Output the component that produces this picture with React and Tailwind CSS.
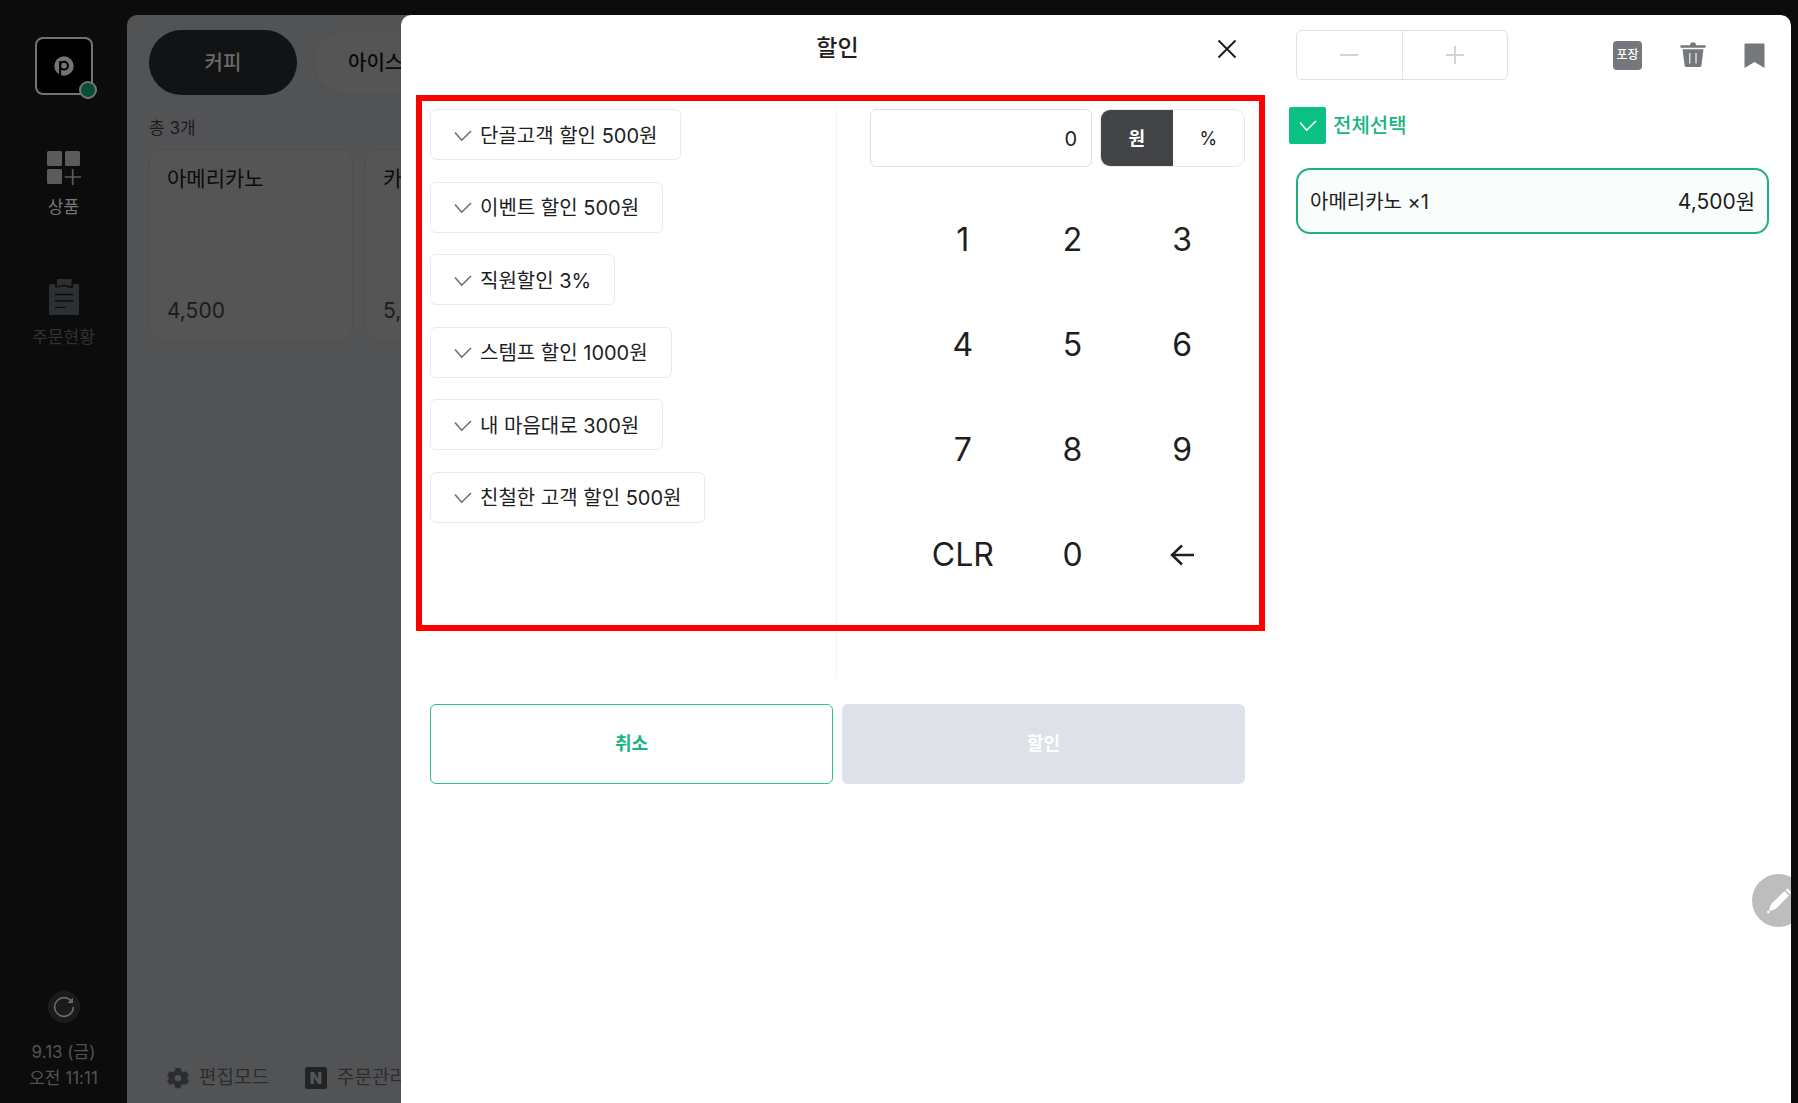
import { useState } from 'react';

const categories = ['커피', '아이스크림'];

const products = [
  { name: '아메리카노', price: '4,500' },
  { name: '카페라떼', price: '5,000' },
];

const discounts = [
  '단골고객 할인 500원',
  '이벤트 할인 500원',
  '직원할인 3%',
  '스템프 할인 1000원',
  '내 마음대로 300원',
  '친철한 고객 할인 500원',
];

const keys = ['1', '2', '3', '4', '5', '6', '7', '8', '9', 'CLR', '0', 'back'];

const CheckMark = ({ className }) => (
  <svg viewBox="0 0 18 12" className={className} fill="none" stroke="currentColor" strokeWidth="1.6">
    <path d="M1 2.5 L7.7 10.2 L17 1" />
  </svg>
);

const Sidebar = () => (
  <aside className="flex w-[127px] shrink-0 flex-col items-center pt-[37px] pb-3">
    <div className="relative flex h-[58px] w-[58px] items-center justify-center rounded-lg border-2 border-[#747474] bg-black">
      <svg viewBox="0 0 20 20" className="h-5 w-5">
        <circle cx="10" cy="10" r="9.7" fill="#747474" />
        <circle cx="10" cy="9.7" r="3.9" fill="none" stroke="#000" strokeWidth="2" />
        <path d="M6.1 5 V20" stroke="#000" strokeWidth="2" />
      </svg>
      <span className="absolute -right-1.5 -bottom-1.5 h-[18px] w-[18px] rounded-full border-2 border-[#747474] bg-[#064d35]" />
    </div>

    <nav className="mt-14 flex flex-col items-center gap-[60px] text-[17px] leading-6">
      <a href="#products" className="flex flex-col items-center gap-[10px] text-[#777]">
        <svg viewBox="0 0 34 34" className="h-[34px] w-[34px]" fill="#5b5b5b">
          <rect x="0" y="0" width="15" height="15" rx="1.5" />
          <rect x="18" y="0" width="15" height="15" rx="1.5" />
          <rect x="0" y="18" width="15" height="15" rx="1.5" />
          <path d="M25.7 18 V34 M17.7 26 H34" stroke="#5b5b5b" strokeWidth="1.7" />
        </svg>
        상품
      </a>
      <a href="#orders" className="flex flex-col items-center gap-[10px] text-[#313233]">
        <svg viewBox="0 0 30 36" className="h-9 w-[30px]" fill="#2d3032">
          <path d="M1.5 5 H6 V8.5 H9.5 L15.2 7 L21 9 H24 V5 H28.5 A1.5 1.5 0 0 1 30 6.5 V34.5 A1.5 1.5 0 0 1 28.5 36 H1.5 A1.5 1.5 0 0 1 0 34.5 V6.5 A1.5 1.5 0 0 1 1.5 5 Z" />
          <path d="M8 0 H22.5 V7.5 L15.2 5.5 L8 7.5 Z" />
          <path d="M6 15.5 H24.5 M6 22 H24.5 M6 28.3 H17" stroke="#0c0c0c" strokeWidth="1.3" />
        </svg>
        주문현황
      </a>
    </nav>

    <button type="button" aria-label="새로고침" className="mt-auto flex h-8 w-8 items-center justify-center rounded-full bg-[#1b1b1b]">
      <svg viewBox="0 0 22 22" className="h-[22px] w-[22px]" fill="none" stroke="#696969" strokeWidth="1.7">
        <path d="M19.5 7.2 A9.3 9.3 0 1 0 20.3 11" />
        <path d="M20 1.5 V7 H14.5 Z" fill="#696969" stroke="none" />
      </svg>
    </button>
    <p className="mt-4 text-center text-[17px] leading-[26px] text-[#535353]">
      9.13 (금)
      <br />
      오전 11:11
    </p>
  </aside>
);

const ProductPanel = () => (
  <div className="flex flex-1 flex-col pt-[15px] pr-4 pb-[9px] pl-[22px] text-xl">
    <div className="flex gap-4">
      {categories.map((name, i) => (
        <button
          key={name}
          type="button"
          className={
            i === 0
              ? 'h-[65px] w-[148px] shrink-0 rounded-full bg-[#121315] font-medium text-[#6a6a6a]'
              : 'h-[65px] shrink-0 rounded-full border border-[#4f5052] bg-[#555] px-[34px] font-medium text-[#0a0a0a]'
          }
        >
          {name}
        </button>
      ))}
    </div>

    <p className="mt-[21px] text-[17px] leading-6 text-[#1b1b1c]">총 3개</p>

    <div className="mt-[9px] flex gap-3">
      {products.map((item) => (
        <button
          key={item.name}
          type="button"
          className="flex h-[192px] w-[204px] shrink-0 flex-col items-start justify-between rounded-xl border border-[#4e4f51] bg-[#555] px-[17px] py-[14px] text-[21px] leading-[30px] text-[#1b1b1c]"
        >
          <span className="text-[#0c0c0c]">{item.name}</span>
          <span>{item.price}</span>
        </button>
      ))}
    </div>

    <div className="mt-auto flex gap-9 pl-[18px] text-[19px] leading-8 text-[#2c2d2f]">
      <button type="button" className="flex shrink-0 items-center gap-[10px]">
        <svg viewBox="0 0 24 24" className="h-6 w-[22px]" fill="#2c2d2f" fillRule="evenodd">
          <path d="M9.3 1 H14.7 L15.6 4.4 L17.8 5.7 L21.2 4.7 L23.9 9.4 L21.4 11.9 V12.3 L23.9 14.8 L21.2 19.4 L17.8 18.5 L15.6 19.8 L14.7 23.2 H9.3 L8.4 19.8 L6.2 18.5 L2.8 19.4 L.1 14.8 L2.6 12.3 V11.9 L.1 9.4 L2.8 4.7 L6.2 5.7 L8.4 4.4 Z M12 8.6 A3.5 3.5 0 1 0 12 15.6 A3.5 3.5 0 1 0 12 8.6 Z" />
        </svg>
        편집모드
      </button>
      <button type="button" className="flex shrink-0 items-center gap-[10px]">
        <span className="flex h-[22px] w-[22px] items-center justify-center rounded-xs bg-[#222325] text-base font-black text-[#555]">N</span>
        주문관리
      </button>
    </div>
  </div>
);

const Keypad = ({ onPress }) => (
  <div className="mt-5 grid grid-cols-3 pr-2 pl-[38px]">
    {keys.map((key) => (
      <button
        key={key}
        type="button"
        aria-label={key === 'back' ? '지우기' : undefined}
        onClick={() => onPress(key)}
        className="flex h-[105px] items-center justify-center text-[32px] text-[#1e1e1f]"
      >
        {key === 'back' ? (
          <svg viewBox="0 0 24 22" className="h-[22px] w-6" fill="none" stroke="currentColor" strokeWidth="2.5">
            <path d="M12 1.5 L2 11 L12 20.5 M2 11 H24" />
          </svg>
        ) : (
          key
        )}
      </button>
    ))}
  </div>
);

const DiscountForm = () => {
  const [amount, setAmount] = useState('0');
  const [unit, setUnit] = useState('원');
  const [selected, setSelected] = useState(null);

  const handlePress = (key) => {
    if (key === 'CLR') {
      setAmount('0');
    } else if (key === 'back') {
      setAmount(amount.slice(0, -1) || '0');
    } else {
      setAmount(amount === '0' ? key : amount + key);
    }
  };

  return (
    <section className="min-w-0 flex-1 px-[29px]">
      <header className="relative flex h-[67px] items-center justify-center">
        <h2 className="text-[23px] font-medium">할인</h2>
        <button type="button" aria-label="닫기" className="absolute right-0 flex h-9 w-9 items-center justify-center">
          <svg viewBox="0 0 20 20" className="h-5 w-5" fill="none" stroke="currentColor" strokeWidth="2">
            <path d="M1.5 1.5 L18.5 18.5 M18.5 1.5 L1.5 18.5" />
          </svg>
        </button>
      </header>

      <div className="relative mt-[27px] flex h-[569px]">
        <div className="flex-1 border-r border-[#f3f4f5]">
          <div className="flex h-[414px] flex-col items-start justify-between">
            {discounts.map((name) => (
              <button
                key={name}
                type="button"
                aria-pressed={selected === name}
                onClick={() => setSelected(name)}
                className="flex h-[51px] items-center gap-2 rounded-md border border-[#e9eaec] px-[23px] pt-0.5 text-xl"
              >
                <CheckMark className="h-3 w-[18px] text-[#6d6e70]" />
                {name}
              </button>
            ))}
          </div>
        </div>

        <div className="w-[408px] pl-[33px]">
          <div className="flex gap-2">
            <input
              type="text"
              aria-label="할인 금액"
              value={amount}
              onChange={(e) => setAmount(e.target.value)}
              className="h-[58px] min-w-0 flex-1 rounded-md border border-[#dcdee1] px-[14px] pt-0.5 text-right text-xl"
            />
            <div className="flex h-[58px] w-[145px] overflow-hidden rounded-[10px] border border-[#e6e7e9] text-lg">
              {['원', '%'].map((u) => (
                <button
                  key={u}
                  type="button"
                  onClick={() => setUnit(u)}
                  className={unit === u ? 'flex-1 bg-[#434448] pt-0.5 font-bold text-white' : 'flex-1 bg-white pt-0.5'}
                >
                  {u}
                </button>
              ))}
            </div>
          </div>
          <Keypad onPress={handlePress} />
        </div>

        {/* highlighted area */}
        <div className="pointer-events-none absolute -top-[14px] -right-5 -left-[14px] h-[536px] border-6 border-[#ff0000]" />
      </div>

      <div className="mt-[26px] grid grid-cols-2 gap-[9px] text-lg font-bold">
        <button type="button" className="h-20 rounded-md border border-[#2fbd8b] text-[#17b57f]">
          취소
        </button>
        <button type="button" className="h-20 rounded-md bg-[#dee1e8] text-white">
          할인
        </button>
      </div>
    </section>
  );
};

const OrderPanel = () => {
  const [allChecked, setAllChecked] = useState(true);

  return (
    <section className="w-[517px] shrink-0 pt-[15px] pr-[22px] pl-[22px] text-xl">
      <div className="flex items-center justify-between">
        <div className="flex h-[50px] w-[212px] rounded-md border border-[#dfe0e1] text-[#d3d4d5]">
          <button type="button" aria-label="수량 감소" className="flex flex-1 items-center justify-center border-r border-[#e6e7e8]">
            <svg viewBox="0 0 18 18" className="h-[18px] w-[18px]" stroke="currentColor" strokeWidth="2">
              <path d="M0 9 H18" />
            </svg>
          </button>
          <button type="button" aria-label="수량 증가" className="flex flex-1 items-center justify-center">
            <svg viewBox="0 0 18 18" className="h-[18px] w-[18px]" stroke="currentColor" strokeWidth="2">
              <path d="M0 9 H18 M9 0 V18" />
            </svg>
          </button>
        </div>

        <div className="flex items-center gap-[38px] pr-1 text-[#74777b]">
          <button type="button" className="h-[29px] w-[29px] rounded-sm bg-[#74777b] text-xs font-medium text-white">
            포장
          </button>
          <button type="button" aria-label="삭제">
            <svg viewBox="0 0 26 26" className="h-[26px] w-[26px]" fill="currentColor">
              <path d="M0.5 3.3 H10 A3 3 0 0 1 16 3.3 H25.5 V5.8 H0.5 Z" />
              <path d="M2.5 7.2 H23.5 L21.3 24 A1.5 1.5 0 0 1 20 25 H6 A1.5 1.5 0 0 1 4.7 24 Z" />
              <path d="M9.8 11 V21.5 M16 11 V21.5" stroke="#fff" strokeWidth="1.1" />
            </svg>
          </button>
          <button type="button" aria-label="보관">
            <svg viewBox="0 0 21 26" className="h-[26px] w-[21px]" fill="currentColor">
              <path d="M1.5 1.5 H19.5 A1 1 0 0 1 20.5 2.5 V26 L10.5 20 L0.5 26 V2.5 A1 1 0 0 1 1.5 1.5 Z" />
            </svg>
          </button>
        </div>
      </div>

      <label className="-ml-[7px] mt-[27px] flex w-fit items-center gap-[7px] font-medium text-[#1bb581]">
        <span className="relative flex h-[37px] w-[37px] items-center justify-center text-white">
          <input
            type="checkbox"
            checked={allChecked}
            onChange={(e) => setAllChecked(e.target.checked)}
            className="absolute inset-0 appearance-none rounded-xs border border-[#0bc083] checked:bg-[#0bc083]"
          />
          <CheckMark className="relative h-3 w-[18px]" />
        </span>
        전체선택
      </label>

      <button
        type="button"
        className="mt-6 flex h-[66px] w-full items-center justify-between rounded-[14px] border-2 border-[#1fb07d] bg-[#f9fdfc] px-3 pt-0.5"
      >
        <span>아메리카노 ×1</span>
        <span className="text-[21px]">4,500원</span>
      </button>
    </section>
  );
};

const App = () => (
  <div className="flex min-h-screen bg-[#0c0c0c] font-[Inter,'Noto_Sans_CJK_KR',sans-serif]">
    <Sidebar />

    <main className="relative mt-[15px] mr-[7px] flex min-w-0 flex-1 overflow-hidden rounded-t-[10px] bg-[#525355]">
      <ProductPanel />

      <div role="dialog" aria-label="할인" className="absolute inset-y-0 right-0 left-[274px] flex rounded-t-[10px] bg-white text-[#1e1e1f]">
        <DiscountForm />
        <OrderPanel />

        <button
          type="button"
          aria-label="메모"
          className="absolute -right-[14px] bottom-44 flex h-[53px] w-[53px] items-center justify-center rounded-full bg-[#bdbdbd]"
        >
          <svg viewBox="0 0 26 26" className="h-[26px] w-[26px]" fill="#fff">
            <path d="M18.5 3 L23 7.5 L10 20.8 L4.3 23 L3 21.7 L5.2 16 Z" />
            <path d="M19.7 2 L21.4 0.6 L25.4 4.6 L24 6.3 Z" />
            <circle cx="2.3" cy="24" r="1.3" />
          </svg>
        </button>
      </div>
    </main>
  </div>
);

export default App;
